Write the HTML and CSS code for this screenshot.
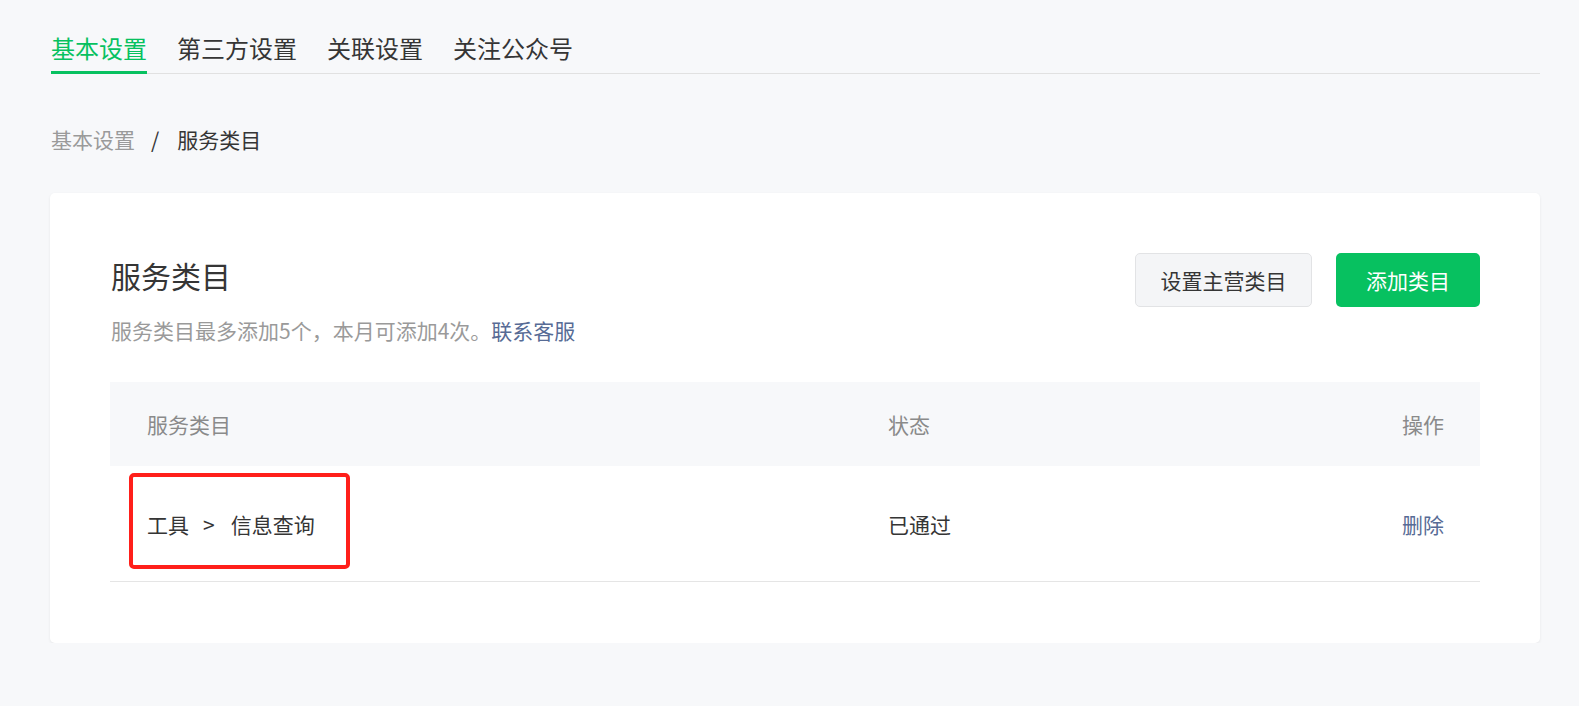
FILE: index.html
```html
<!DOCTYPE html>
<html lang="zh-CN">
<head>
<meta charset="utf-8">
<title>服务类目</title>
<link rel="stylesheet" href="styles.css">
</head>
<body>
<div class="page">
  <nav class="tabs">
    <a class="tab active">基本设置</a>
    <a class="tab">第三方设置</a>
    <a class="tab">关联设置</a>
    <a class="tab">关注公众号</a>
  </nav>
  <div class="breadcrumb">
    <span class="crumb-parent">基本设置</span>
    <span class="crumb-sep">/</span>
    <span class="crumb-current">服务类目</span>
  </div>
  <section class="card">
    <div class="card-head">
      <div class="head-text">
        <h2 class="title">服务类目</h2>
        <p class="desc">服务类目最多添加5个，本月可添加4次。<a class="link">联系客服</a></p>
      </div>
      <div class="actions">
        <button class="btn btn-default">设置主营类目</button>
        <button class="btn btn-primary">添加类目</button>
      </div>
    </div>
    <div class="table">
      <div class="tr thead">
        <div class="td">服务类目</div>
        <div class="td">状态</div>
        <div class="td right">操作</div>
      </div>
      <div class="tr tbody">
        <div class="td">工具<span class="arrow">&gt;</span>信息查询</div>
        <div class="td">已通过</div>
        <div class="td right"><a class="link">删除</a></div>
        <div class="highlight"></div>
      </div>
    </div>
  </section>
</div>
</body>
</html>
```
FILE: styles.css
```css
* { box-sizing: border-box; }
html, body {
  margin: 0;
  padding: 0;
  background: #f7f8fa;
}
body {
  font-family: "Noto Sans CJK SC", "Noto Sans", sans-serif;
  color: #353535;
}
.page {
  padding: 31px 39px 0 51px;
}
.tabs {
  display: flex;
  gap: 30px;
  border-bottom: 1px solid #e1e1e1;
  height: 43px;
}
.tab {
  font-size: 24px;
  line-height: 34px;
  padding-bottom: 6px;
  border-bottom: 3px solid transparent;
  height: 43px;
  color: #353535;
  cursor: pointer;
}
.tab.active {
  color: #07c160;
  border-bottom-color: #07c160;
}
.breadcrumb {
  margin-top: 50px;
  font-size: 21px;
  line-height: 30px;
  display: flex;
}
.crumb-parent { color: #9a9a9a; }
.crumb-sep { margin: 0 18px 0 16px; color: #353535; }
.crumb-current { color: #353535; }
.card {
  margin-top: 39px;
  margin-left: -1px;
  background: #fff;
  border-radius: 5px;
  box-shadow: 0 1px 3px rgba(0, 0, 0, 0.07);
  padding: 60px 60px 61px 60px;
}
.card-head {
  display: flex;
  justify-content: space-between;
  align-items: flex-start;
}
.title {
  margin: -2px 0 0 1px;
  font-size: 30px;
  font-weight: normal;
  line-height: 48px;
  color: #353535;
}
.desc {
  margin: 16px 0 0 1px;
  font-size: 21px;
  line-height: 30px;
  color: #9a9a9a;
}
.link {
  color: #576b95;
  cursor: pointer;
}
.actions {
  display: flex;
  gap: 24px;
}
.btn {
  font-family: inherit;
  font-size: 21px;
  height: 54px;
  border-radius: 5px;
  border: 1px solid transparent;
  cursor: pointer;
}
.btn-default {
  background: #f4f5f7;
  border-color: #e2e3e5;
  color: #353535;
  padding: 0 24.5px;
}
.btn-primary {
  background: #07c160;
  color: #fff;
  padding: 0 29px;
}
.table {
  margin-top: 37px;
}
.tr {
  display: grid;
  grid-template-columns: 741px 1fr auto;
  padding: 0 36px 0 37px;
  align-items: center;
  font-size: 21px;
  line-height: 30px;
}
.thead {
  background: #f7f8fa;
  height: 84px;
  color: #8a8a8a;
}
.tbody {
  position: relative;
  height: 116px;
  border-bottom: 1px solid #e5e5e5;
  color: #353535;
}
.right { text-align: right; }
.arrow {
  margin: 0 16px 0 14px;
}
.highlight {
  position: absolute;
  left: 19px;
  top: 7px;
  width: 221px;
  height: 96px;
  border: 4px solid #ff1f1a;
  border-radius: 5px;
  pointer-events: none;
}
```
